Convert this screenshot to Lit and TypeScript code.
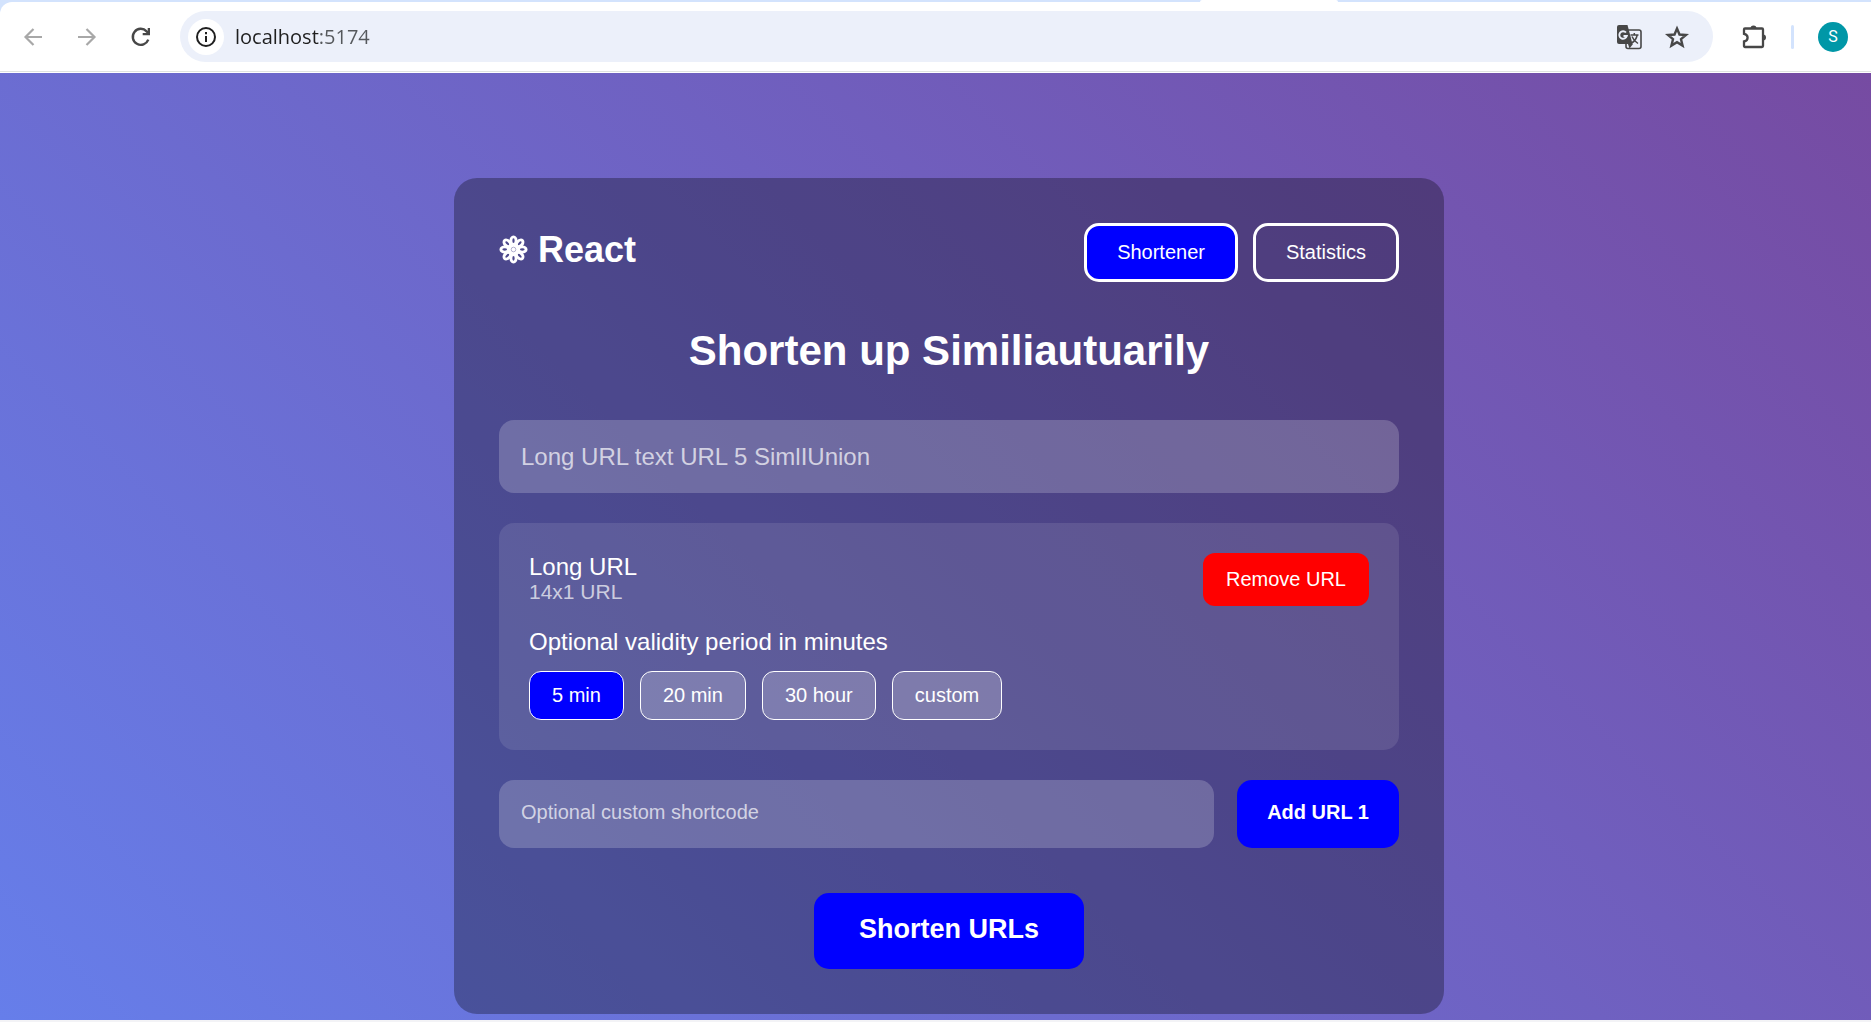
import { LitElement, html, css, svg } from "lit";
import { customElement, state } from "lit/decorators.js";
import { classMap } from "lit/directives/class-map.js";

@customElement("browser-bar")
class BrowserBar extends LitElement {
  static styles = css`
    :host {
      display: block;
      background: #d3e3fd;
    }
    .strip {
      height: 2px;
      display: flex;
      justify-content: flex-end;
      padding-right: 533px;
    }
    .tab {
      width: 138px;
      background: #fff;
      border-radius: 4px 4px 0 0;
    }
    .bar {
      display: flex;
      align-items: center;
      height: 70px;
      box-sizing: border-box;
      padding: 0 23px 0 20px;
      background: #fff;
      border-radius: 12px 0 0 0;
      border-bottom: 1px solid #dfe3e0;
    }
    .edge {
      height: 1px;
      background: #fff;
    }
    button {
      display: flex;
      align-items: center;
      justify-content: center;
      padding: 0;
      border: 0;
      background: none;
      color: #474747;
    }
    svg {
      display: block;
    }
    .nav {
      display: flex;
      gap: 28px;
      margin-right: 26px;
    }
    .nav button,
    .tool {
      width: 26px;
      height: 26px;
    }
    .nav button:disabled {
      color: #a8a8a8;
    }
    .omnibox {
      flex: 1;
      display: flex;
      align-items: center;
      height: 51px;
      box-sizing: border-box;
      padding: 0 23px 0 8px;
      border-radius: 26px;
      background: #ecf0fa;
    }
    .info {
      width: 36px;
      height: 36px;
      border-radius: 50%;
      background: #fff;
      color: #1f1f1f;
    }
    .address {
      flex: 1;
      min-width: 0;
      margin: 0 11px;
      padding: 0;
      border: 0;
      outline: 0;
      font: 20px/28px "Open Sans", "Noto Sans", sans-serif;
      color: transparent;
      background: linear-gradient(to right, #1f1f1f 84px, #55585c 84px);
      background-clip: text;
      -webkit-background-clip: text;
    }
    .tools {
      display: flex;
      gap: 22px;
    }
    .extensions {
      margin: 0 24px 0 28px;
    }
    .rule {
      width: 3px;
      height: 24px;
      border-radius: 2px;
      background: #d3e3fd;
    }
    .avatar {
      width: 30px;
      height: 30px;
      margin-left: 24px;
      border-radius: 50%;
      background: #0097a7;
      color: #fff;
      font: 16px/30px Roboto, sans-serif;
    }
  `;

  render() {
    return html`
      <div class="strip"><div class="tab"></div></div>
      <div class="bar">
        <div class="nav">
          <button disabled aria-label="Back">
            <svg width="26" height="26" viewBox="0 0 26 26" fill="none" stroke="currentColor" stroke-width="2.2">
              <path d="M22 13H6M13.5 5L5.5 13l8 8" />
            </svg>
          </button>
          <button disabled aria-label="Forward">
            <svg width="26" height="26" viewBox="0 0 26 26" fill="none" stroke="currentColor" stroke-width="2.2">
              <path d="M4 13h16M12.500 5l8 8-8 8" />
            </svg>
          </button>
          <button aria-label="Reload">
            <svg width="26" height="26" viewBox="0 0 26 26" fill="none" stroke="currentColor" stroke-width="2.4">
              <path d="M20.300 15.600A8 8 0 1 1 18.600 7.300L20.500 9.200" />
              <path d="M22 4v7.300h-7.300V9h5V4z" fill="currentColor" stroke="none" />
            </svg>
          </button>
        </div>
        <div class="omnibox">
          <button class="info" aria-label="View site information">
            <svg width="22" height="22" viewBox="0 0 22 22" fill="none" stroke="currentColor" stroke-width="2">
              <circle cx="11" cy="11" r="9" />
              <path d="M11 10v6M11 6v2.200" />
            </svg>
          </button>
          <input class="address" type="text" aria-label="Address" value="localhost:5174" />
          <div class="tools">
            <button class="tool" aria-label="Translate this page">
              <svg width="26" height="26" viewBox="0 0 26 26">
                <rect x="10" y="6" width="15" height="18.500" rx="2" fill="none" stroke="#474747" stroke-width="1.600" />
                <path d="M3 1h8.500l5 19H3a2 2 0 0 1-2-2V3a2 2 0 0 1 2-2z" fill="#474747" />
                <path d="M12 20h5l-3.500 4.500z" fill="#474747" />
                <path d="M10 8.500a3.800 3.800 0 1 0 .8 3.500H7.500" fill="none" stroke="#ecf0fa" stroke-width="1.900" />
                <path d="M14.500 11h8M18.300 9v2M21.200 11c-.7 3.500-3 6.500-5.500 8M16 12.500c1 2.500 3 5 6 7" fill="none" stroke="#474747" stroke-width="1.500" />
              </svg>
            </button>
            <button class="tool" aria-label="Bookmark this page">
              <svg width="26" height="26" viewBox="0 0 26 26" fill="none" stroke="currentColor" stroke-width="2.400">
                <path d="M13 4.500l2.500 6 6.500.5-5 4.200 1.600 6.400L13 18.200l-5.600 3.400L9 15.200 4 11l6.500-.5z" />
              </svg>
            </button>
          </div>
        </div>
        <button class="tool extensions" aria-label="Extensions">
          <svg width="26" height="26" viewBox="0 0 26 26">
            <path
              d="M4 4.500h17a1 1 0 0 1 1 1V22a1 1 0 0 1-1 1H4a1 1 0 0 1-1-1v-4.500c2.200-.4 3.600-1.800 3.600-3.800S5.200 10.300 3 9.900V5.500a1 1 0 0 1 1-1z"
              fill="none"
              stroke="#474747"
              stroke-width="2.300"
            />
            <path d="M9.500 4.500a3 3 0 0 1 6 0zM22 10.500a3 3 0 0 1 0 6z" fill="#474747" />
          </svg>
        </button>
        <div class="rule"></div>
        <button class="avatar" aria-label="Profile">S</button>
      </div>
      <div class="edge"></div>
    `;
  }
}

const petals = [0, 45, 90, 135, 180, 225, 270, 315];

@customElement("app-root")
class AppRoot extends LitElement {
  static styles = css`
    :host {
      display: flex;
      flex-direction: column;
      min-height: 100vh;
      font-family: "Liberation Sans", Arial, sans-serif;
      color: #fff;
    }
    main {
      flex: 1;
      padding: 105px 0 6px 27px;
      background: linear-gradient(45deg, #667eea, #764ba2);
    }
    .edge {
      height: 2px;
      background: #f3f3f6;
    }
    .card {
      max-width: 900px;
      margin: 0 auto;
      padding: 45px;
      border-radius: 23px;
      background: rgba(0, 0, 0, 0.3);
    }
    .top,
    .entry-top {
      display: flex;
      justify-content: space-between;
      align-items: flex-start;
    }
    .logo {
      display: flex;
      align-items: center;
      gap: 10px;
      margin: 0;
      padding-top: 6px;
      font-size: 36px;
      line-height: 41px;
    }
    .tabs,
    .chips {
      display: flex;
      gap: 15px;
    }
    .chips {
      gap: 16px;
    }
    button,
    input {
      margin: 0;
      border: 0;
      outline: 0;
      font-family: inherit;
      font-size: 20px;
      line-height: 23px;
      color: #fff;
    }
    .tab {
      padding: 15px 30px;
      border: 3px solid #fff;
      border-radius: 15px;
      background: none;
    }
    .tab.active,
    .chip.active {
      background: #00f;
    }
    h2 {
      margin: 45px 0;
      font-size: 42px;
      line-height: 48px;
      text-align: center;
    }
    input {
      display: block;
      width: 100%;
      box-sizing: border-box;
      padding: 22px;
      border-radius: 15px;
      background: rgba(255, 255, 255, 0.2);
    }
    input::placeholder {
      color: rgba(255, 255, 255, 0.7);
      opacity: 1;
    }
    .long {
      height: 73px;
      font-size: 24px;
      line-height: 28px;
    }
    .entry {
      margin: 30px 0;
      padding: 30px;
      border-radius: 15px;
      background: rgba(255, 255, 255, 0.1);
    }
    .entry p,
    legend {
      margin: 0;
      padding: 0;
      font-size: 24px;
      line-height: 27px;
    }
    .entry .sub {
      font-size: 21px;
      line-height: 24px;
      color: rgba(255, 255, 255, 0.7);
    }
    .remove {
      padding: 15px 23px;
      border-radius: 12px;
      background: #f00;
    }
    fieldset {
      min-width: 0;
      margin: 22px 0 0;
      padding: 0;
      border: 0;
    }
    legend {
      margin-bottom: 16px;
    }
    .chip {
      padding: 12px 22px;
      border: 1px solid #fff;
      border-radius: 12px;
      background: rgba(255, 255, 255, 0.2);
    }
    .row {
      display: flex;
      gap: 23px;
    }
    .code {
      flex: 1;
      min-width: 0;
      height: 68px;
      padding: 21px 22px 24px;
    }
    .add,
    .submit {
      border-radius: 15px;
      background: #00f;
      font-weight: bold;
    }
    .add {
      padding: 21px 30px 24px;
    }
    .submit {
      display: block;
      margin: 45px auto 0;
      padding: 21px 45px 24px;
      font-size: 27px;
      line-height: 31px;
    }
  `;

  @state() private tab = "Shortener";
  @state() private period = "5 min";

  render() {
    return html`
      <browser-bar></browser-bar>
      <main>
        <div class="card">
          <header class="top">
            <h1 class="logo">
              <svg width="29" height="29" viewBox="-14.5 -14.5 29 29" aria-hidden="true">
                ${petals.map(
                  (a) => svg`<ellipse cx="0" cy="-8.8" rx="2.6" ry="3.8" transform="rotate(${a})"
                    fill="none" stroke="#fff" stroke-width="2.9" />`
                )}
                <circle r="6.500" fill="#fff" />
                <circle r="2.300" fill="none" stroke="#a9a6c8" stroke-width="0.900" />
              </svg>
              <span>React</span>
            </h1>
            <nav class="tabs">
              ${["Shortener", "Statistics"].map(
                (t) => html`<button
                  class=${classMap({ tab: true, active: t === this.tab })}
                  @click=${() => (this.tab = t)}
                >${t}</button>`
              )}
            </nav>
          </header>
          <h2>Shorten up Similiautuarily</h2>
          <input class="long" type="text" aria-label="Long URL" placeholder="Long URL text URL 5 SimlIUnion" />
          <section class="entry">
            <div class="entry-top">
              <div>
                <p>Long URL</p>
                <p class="sub">14x1 URL</p>
              </div>
              <button class="remove">Remove URL</button>
            </div>
            <fieldset>
              <legend>Optional validity period in minutes</legend>
              <div class="chips">
                ${["5 min", "20 min", "30 hour", "custom"].map(
                  (p) => html`<button
                    class=${classMap({ chip: true, active: p === this.period })}
                    @click=${() => (this.period = p)}
                  >${p}</button>`
                )}
              </div>
            </fieldset>
          </section>
          <div class="row">
            <input class="code" type="text" aria-label="Custom shortcode" placeholder="Optional custom shortcode" />
            <button class="add">Add URL 1</button>
          </div>
          <button class="submit">Shorten URLs</button>
        </div>
      </main>
      <div class="edge"></div>
    `;
  }
}
